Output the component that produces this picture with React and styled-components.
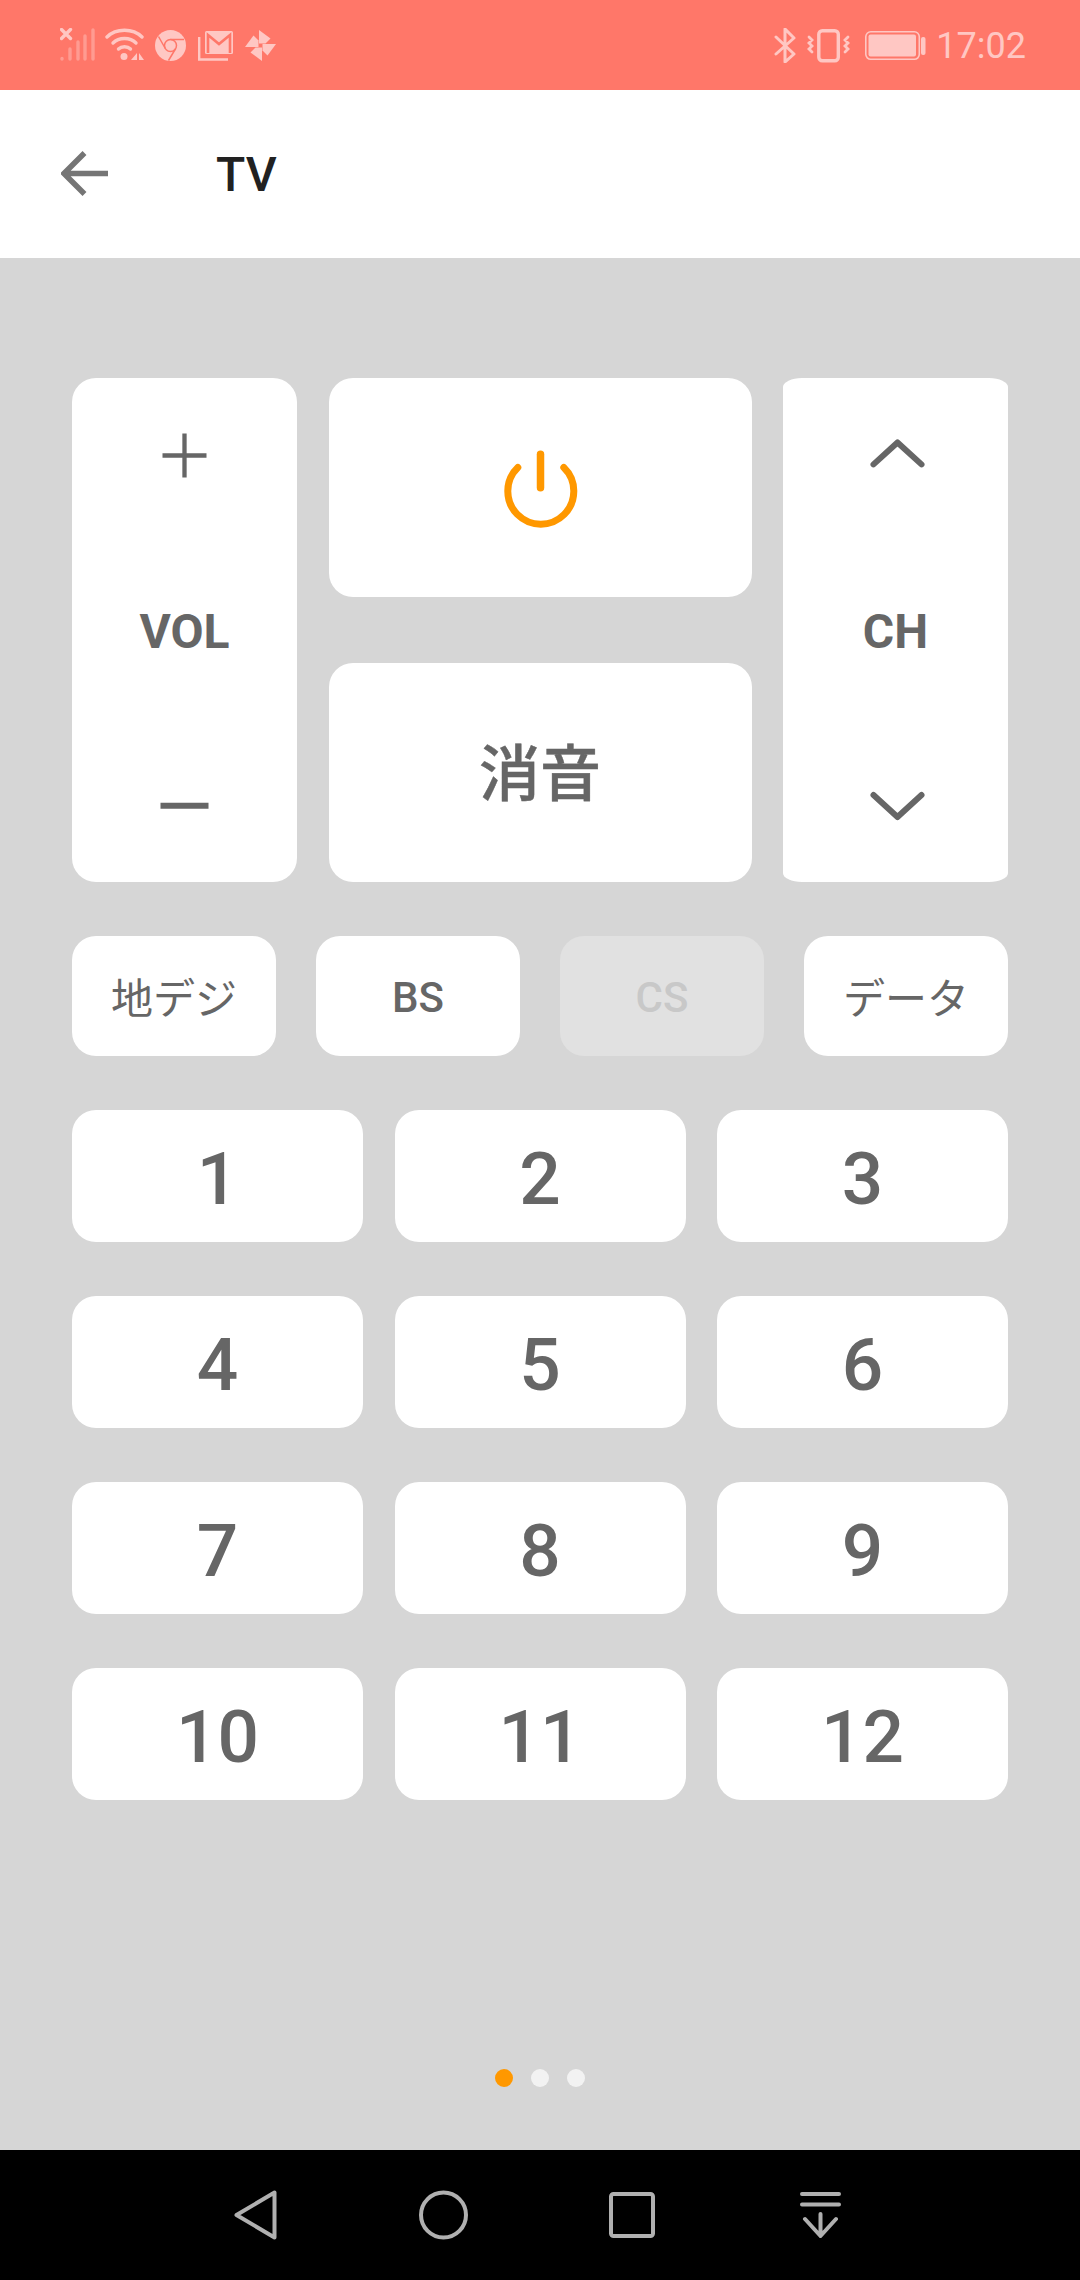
import React from "react";
import styled, { createGlobalStyle } from "styled-components";

const GlobalStyle = createGlobalStyle`
  html, body {
    margin: 0;
    padding: 0;
    background: #d6d6d6;
  }
`;

const TINT = "#ffc7c3";
const CORAL = "#ff7769";
const GREY = "#666666";
const ORANGE = "#ff9800";

const Page = styled.div`
  width: 1080px;
  height: 2280px;
  display: flex;
  flex-direction: column;
  font-family: Roboto, "Noto Sans CJK JP", sans-serif;
`;

const StatusBar = styled.div`
  height: 90px;
  flex: none;
  display: flex;
  align-items: flex-start;
  background: ${CORAL};
  padding: 0 54px 0 60px;
  box-sizing: border-box;
`;

const StatusIcon = styled.svg`
  display: block;
  flex: none;
  margin-top: 28px;
  margin-left: ${({ $gap }) => $gap || 0}px;
`;

const Clock = styled.span`
  margin-left: 10px;
  font-size: 36px;
  line-height: 92px;
  color: ${TINT};
`;

const Spacer = styled.div`
  flex: 1;
`;

const Header = styled.header`
  height: 168px;
  flex: none;
  display: flex;
  align-items: center;
  background: #fff;
  padding-left: 61px;
  box-sizing: border-box;
`;

const Title = styled.h1`
  margin: 0 0 0 107px;
  font-size: 48px;
  font-weight: 500;
  color: #212121;
`;

const Main = styled.main`
  flex: 1;
  display: flex;
  flex-direction: column;
  padding: 120px 72px 63px;
  box-sizing: border-box;
  background: #d6d6d6;
`;

const Remote = styled.div`
  display: grid;
  grid-template-columns: 225px 423px 225px;
  justify-content: space-between;
`;

const Key = styled.button`
  border: none;
  padding: 0;
  margin: 0;
  background: ${({ $off }) => ($off ? "#e1e1e1" : "#fff")};
  color: ${({ $off }) => ($off ? "#c8c8c8" : GREY)};
  border-radius: 24px;
  font-family: inherit;
  display: flex;
  align-items: center;
  justify-content: center;
`;

const SideKey = styled(Key)`
  height: 504px;
  flex-direction: column;
  justify-content: flex-start;
  padding-top: 48px;
  box-sizing: border-box;
  border-radius: ${({ $clipped }) => ($clipped ? "19px / 9px" : "24px")};
`;

const SideLabel = styled.span`
  display: block;
  height: 54px;
  line-height: 54px;
  margin: 119px 0 117px;
  font-size: 48px;
  font-weight: 700;
`;

const SideIcon = styled.svg`
  display: block;
  flex: none;
`;

const MiddleStack = styled.div`
  display: flex;
  flex-direction: column;
  justify-content: space-between;
`;

const BigKey = styled(Key)`
  height: 219px;
  box-sizing: border-box;
`;

const MuteKey = styled(BigKey)`
  padding-bottom: 6px;
  font-size: 61px;
  font-weight: 500;
  -webkit-text-stroke: 0.4px ${GREY};
`;

const SourceRow = styled.div`
  display: grid;
  grid-template-columns: repeat(4, 204px);
  justify-content: space-between;
  margin-top: 54px;
`;

const SourceKey = styled(Key)`
  height: 120px;
  box-sizing: border-box;
  padding: ${({ $latin }) => ($latin ? "2px 0 0" : "0 0 2px")};
  font-size: 42px;
  font-weight: ${({ $latin }) => ($latin ? 500 : 400)};
`;

const NumberPad = styled.div`
  display: grid;
  grid-template-columns: repeat(3, 291px);
  justify-content: space-between;
  row-gap: 54px;
  margin-top: 54px;
`;

const NumberKey = styled(Key)`
  height: 132px;
  box-sizing: border-box;
  padding-top: 6px;
  font-size: 73px;
  font-weight: 500;
`;

const Dots = styled.div`
  margin-top: auto;
  display: flex;
  justify-content: center;
  gap: 18px;
`;

const Dot = styled.span`
  width: 18px;
  height: 18px;
  border-radius: 50%;
  background: ${({ $active }) => ($active ? ORANGE : "#f2f2f2")};
`;

const NavBar = styled.nav`
  height: 130px;
  flex: none;
  background: #000;
  display: flex;
  align-items: center;
  padding-left: 234px;
  box-sizing: border-box;
`;

const NavIcon = styled.svg`
  display: block;
  flex: none;
  margin-left: ${({ $gap }) => $gap || 0}px;
`;

const Signal = () => (
  <StatusIcon width="35" height="33" viewBox="0 0 35 33">
    <g stroke={TINT} strokeWidth="3.4" strokeLinecap="round">
      <path d="M1.5 1.5l9 9M10.5 1.5l-9 9" />
      <g opacity="0.45">
        <path d="M2 30.5v.5M10 21v10M18 14v17M25 8v23M33 2v29" />
      </g>
    </g>
  </StatusIcon>
);

const Wifi = () => (
  <StatusIcon $gap={10} width="39" height="33" viewBox="0 0 39 33">
    <g fill="none" stroke={TINT} strokeWidth="3.4" strokeLinecap="round">
      <path d="M2 9C11 0 28 0 37 9" />
      <path d="M8 15c6-6 17-6 23 0" />
      <path d="M13.500 21c3-3 9-3 12 0" />
    </g>
    <circle cx="19" cy="28.500" r="3.500" fill={TINT} />
    <path d="M32 25v7h-6zM34 25v7h5z" fill={TINT} />
  </StatusIcon>
);

const Chrome = () => (
  <StatusIcon $gap={11} width="31" height="33" viewBox="0 0 31 33">
    <circle cx="15.500" cy="17.500" r="15.500" fill={TINT} />
    <circle cx="15.500" cy="17.500" r="6" fill={TINT} stroke={CORAL} strokeWidth="1.500" />
    <path d="M15.500 11.500H29M10.300 20.500L3.500 8.500M20.700 20.500L13.500 32.500" stroke={CORAL} strokeWidth="1.500" fill="none" />
  </StatusIcon>
);

const Mail = () => (
  <StatusIcon $gap={12} width="35" height="33" viewBox="0 0 35 33">
    <rect x="7" y="3" width="28" height="23" rx="1.500" fill={TINT} />
    <path d="M10 25V7l11 9 11-9v18" fill="none" stroke={CORAL} strokeWidth="2.600" />
    <path d="M1.200 9v22.500h28.800" fill="none" stroke={TINT} strokeWidth="2.400" />
  </StatusIcon>
);

const Pinwheel = () => (
  <StatusIcon $gap={12} width="31" height="33" viewBox="0 0 31 33">
    <g fill={TINT} transform="translate(15.500 17.500)">
      {[0, 90, 180, 270].map((angle) => (
        <path key={angle} d="M2-1.500H15.500L7 10 2 5Z" transform={`rotate(${angle})`} />
      ))}
    </g>
  </StatusIcon>
);

const Bluetooth = () => (
  <StatusIcon width="23" height="35" viewBox="0 0 23 35">
    <path
      d="M2 9l18 17-9 8V1l9 9L2 26"
      fill="none"
      stroke={TINT}
      strokeWidth="3"
      strokeLinejoin="round"
      strokeLinecap="round"
    />
  </StatusIcon>
);

const Vibrate = () => (
  <StatusIcon $gap={10} width="43" height="35" viewBox="0 0 43 35">
    <rect x="11.800" y="2.800" width="19.500" height="30" rx="3.500" fill="none" stroke={TINT} strokeWidth="3.400" />
    <path
      d="M2 9l3 3-3 3 3 3-3 3 3 3M41 9l-3 3 3 3-3 3 3 3-3 3"
      fill="none"
      stroke={TINT}
      strokeWidth="2.800"
      strokeLinecap="round"
    />
  </StatusIcon>
);

const Battery = () => (
  <StatusIcon $gap={15} width="61" height="33" viewBox="0 0 61 33">
    <rect x="0.800" y="3.800" width="53.500" height="27.500" rx="5" fill="none" stroke={TINT} strokeWidth="1.600" />
    <rect x="3.500" y="6.500" width="47.500" height="22" rx="2" fill={TINT} />
    <rect x="56" y="9" width="4.500" height="18" rx="2" fill={TINT} />
  </StatusIcon>
);

const BackArrow = () => (
  <svg width="48" height="48" viewBox="0 0 48 48" style={{ display: "block" }}>
    <path d="M47 23.500H4M23.500 3L3 23.500 23.500 44" fill="none" stroke="#757575" strokeWidth="5.500" />
  </svg>
);

const PowerIcon = () => (
  <svg width="80" height="84" viewBox="0 0 80 84" style={{ display: "block" }}>
    <path
      d="M17.800 21.500A33 33 0 1 0 63.800 21.500"
      fill="none"
      stroke={ORANGE}
      strokeWidth="7"
      strokeLinecap="round"
    />
    <path d="M40.500 8.250v33.500" stroke={ORANGE} strokeWidth="7.500" strokeLinecap="round" />
  </svg>
);

const side = {
  plus: <path d="M29.500 7.500v44M7.500 29.500h44" stroke={GREY} strokeWidth="4.300" fill="none" />,
  minus: <path d="M5.500 29.750h48" stroke={GREY} strokeWidth="6" fill="none" />,
  up: (
    <path
      d="M7.500 38.400L31.500 16.500l24 21.900"
      stroke={GREY}
      strokeWidth="6"
      strokeLinecap="round"
      strokeLinejoin="round"
      fill="none"
    />
  ),
  down: (
    <path
      d="M7.500 19L31.500 41l24-22"
      stroke={GREY}
      strokeWidth="6"
      strokeLinecap="round"
      strokeLinejoin="round"
      fill="none"
    />
  ),
};

const CHANNELS = ["1", "2", "3", "4", "5", "6", "7", "8", "9", "10", "11", "12"];

export default function App() {
  return (
    <Page>
      <GlobalStyle />
      <StatusBar>
        <Signal />
        <Wifi />
        <Chrome />
        <Mail />
        <Pinwheel />
        <Spacer />
        <Bluetooth />
        <Vibrate />
        <Battery />
        <Clock>17:02</Clock>
      </StatusBar>
      <Header>
        <BackArrow />
        <Title>TV</Title>
      </Header>
      <Main>
        <Remote>
          <SideKey>
            <SideIcon width="60" height="60" viewBox="0 0 60 60">{side.plus}</SideIcon>
            <SideLabel>VOL</SideLabel>
            <SideIcon width="60" height="60" viewBox="0 0 60 60">{side.minus}</SideIcon>
          </SideKey>
          <MiddleStack>
            <BigKey>
              <PowerIcon />
            </BigKey>
            <MuteKey>消音</MuteKey>
          </MiddleStack>
          <SideKey $clipped>
            <SideIcon width="60" height="60" viewBox="0 0 60 60">{side.up}</SideIcon>
            <SideLabel>CH</SideLabel>
            <SideIcon width="60" height="60" viewBox="0 0 60 60">{side.down}</SideIcon>
          </SideKey>
        </Remote>
        <SourceRow>
          <SourceKey>地デジ</SourceKey>
          <SourceKey $latin>BS</SourceKey>
          <SourceKey $latin $off>CS</SourceKey>
          <SourceKey>データ</SourceKey>
        </SourceRow>
        <NumberPad>
          {CHANNELS.map((n) => (
            <NumberKey key={n}>{n}</NumberKey>
          ))}
        </NumberPad>
        <Dots>
          <Dot $active />
          <Dot />
          <Dot />
        </Dots>
      </Main>
      <NavBar>
        <NavIcon width="43" height="50" viewBox="0 0 43 50">
          <path d="M40.500 2.500v45L2.500 25z" fill="none" stroke="#b0b0b0" strokeWidth="4" strokeLinejoin="round" />
        </NavIcon>
        <NavIcon $gap={142} width="49" height="50" viewBox="0 0 49 50">
          <circle cx="24.500" cy="25" r="22.500" fill="none" stroke="#b0b0b0" strokeWidth="4" />
        </NavIcon>
        <NavIcon $gap={141} width="46" height="46" viewBox="0 0 46 46">
          <rect x="2" y="2" width="42" height="42" rx="2.500" fill="none" stroke="#b0b0b0" strokeWidth="4" />
        </NavIcon>
        <NavIcon $gap={145} width="41" height="46" viewBox="0 0 41 46">
          <path
            d="M2 2h37M2 12.500h37M20.500 22v22M5 27l15.500 17L36 27"
            fill="none"
            stroke="#b0b0b0"
            strokeWidth="4"
            strokeLinecap="round"
            strokeLinejoin="round"
          />
        </NavIcon>
      </NavBar>
    </Page>
  );
}
